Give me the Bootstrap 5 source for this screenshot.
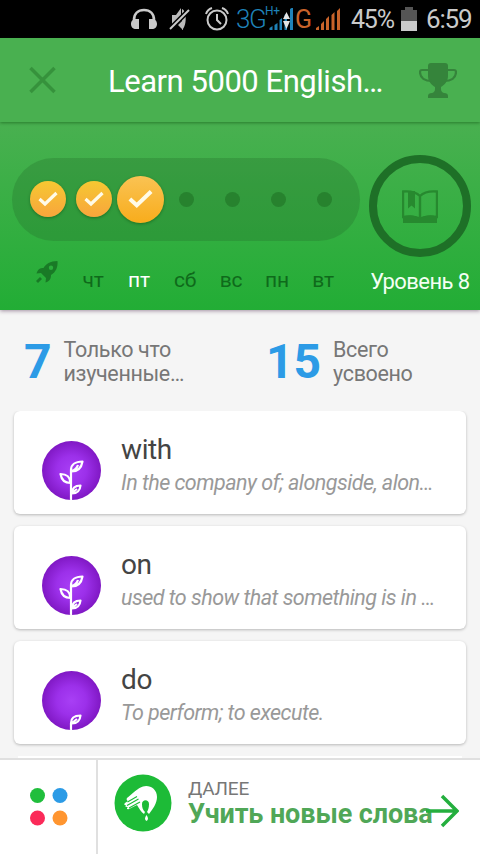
<!DOCTYPE html>
<html lang="ru">
<head>
<meta charset="utf-8">
<meta name="viewport" content="width=device-width, initial-scale=1">
<title>Learn 5000 English</title>
<link rel="stylesheet" href="https://cdn.jsdelivr.net/npm/bootstrap@5.3.0/dist/css/bootstrap.min.css">
<style>
body{font-family:Roboto,"Liberation Sans",sans-serif;background:#f5f5f5;width:480px;height:854px;line-height:1}
svg{display:block;flex:none}
.statusbar{height:38px;background:#000;color:#cacaca;padding-left:131px}
.alarm{margin-left:12px}
.net-a{font-size:26px;letter-spacing:-1.4px;color:#1f82b8;font-weight:300;width:29px;margin-left:7px}
.net-h{font-size:12px;letter-spacing:-.3px;color:#1f82b8;width:17px;height:28px}
.net-bars{margin-left:-13px}
.net-g{font-size:25px;letter-spacing:-1px;color:#c8632a;width:20px;margin-left:1px}
.net-orange{margin-left:1px}
.batt-pct{font-size:25px;letter-spacing:-1.2px;margin-left:10px;width:50px}
.clock{font-size:26px;letter-spacing:-1.2px;margin-left:9px}
.appbar{height:84px;background:#49b050;color:#fff;z-index:2;box-shadow:0 1px 3px rgba(0,60,0,.45);padding:0 23px 0 29px}
.app-title{font-size:31px;letter-spacing:-.47px;margin-left:52px;width:311px;padding-top:4px}
.hero{height:188px;background:linear-gradient(#49b050,#22ad35);padding:33px 9px 0 12px;box-shadow:0 1px 4px rgba(60,20,60,.45);z-index:1}
.streak{width:348px;padding-top:3px}
.pill{height:83px;border-radius:42px;background:rgba(38,110,42,.3);padding:0 13px 1px}
.day{width:46px;flex:none;display:flex;justify-content:center;align-items:center}
.coin{width:36px;height:36px;border-radius:50%;background:linear-gradient(#f6c832,#f8a53c);box-shadow:0 1px 3px rgba(0,50,0,.4);display:flex;align-items:center;justify-content:center;flex:none}
.coin-lg{width:47px;height:47px;background:linear-gradient(#fac353,#f8ac1c)}
.dot{width:15px;height:15px;border-radius:50%;background:#27822e}
.names{padding:0 14px 0 12px;margin-top:21px;font-size:21px;letter-spacing:-.2px;color:#0f6a1b;height:36px}
.level{width:102px}
.ring{width:102px;height:102px;border:8px solid #1e7027}
.level-name{font-size:22px;letter-spacing:-.55px;margin-top:14px;color:#f4fff4}
.stats{height:101px;padding:30px 0 0 24px}
.stat-new{width:242px}
.num{font-size:48px;color:#2c9be6;font-weight:700;line-height:44px}
.stat-label{font-size:21.5px;letter-spacing:-.35px;line-height:24px;color:#777;margin:-2px 0 0 12px}
.word{height:103px;margin:0 14px 12px;background:#fff;border-radius:6px;box-shadow:0 1px 3px rgba(0,0,0,.25);padding:0 28px}
.orb{margin-top:15px}
.term{font-size:28px;letter-spacing:-.4px;color:#444;margin-top:4px}
.def{font-size:21.5px;letter-spacing:-.52px;font-style:italic;color:#999;margin-top:8px}
.word-next{height:4px;margin:0 18px;background:#fff}
.word-list{height:347px}
.bottombar{height:96px;background:#fff;border-top:2px solid #e0e0e0}
.menu{width:98px;border-right:2px solid #e0e0e0;padding-left:2px}
.next-icon{margin-top:-2px}
.next-over{font-size:19px;letter-spacing:-.2px;color:#777;margin-top:-1px}
.next-main{font-size:27px;letter-spacing:-.1px;font-weight:700;color:#50a757;width:244px;margin-top:-1px}
.next-arrow{margin-left:-6px;margin-top:18px}
</style>
<script src="https://cdn.jsdelivr.net/npm/bootstrap@5.3.0/dist/js/bootstrap.bundle.min.js"></script>
</head>
<body class="d-flex flex-column overflow-hidden text-nowrap">
<svg width="0" height="0" class="position-absolute">
<defs>
<radialGradient id="violet"><stop offset="0" stop-color="#a83ff5"/><stop offset=".5" stop-color="#9c30ea"/><stop offset="1" stop-color="#8018c4"/></radialGradient>
<clipPath id="orbclip"><circle cx="29.5" cy="29.5" r="29.5"/></clipPath>
<symbol id="tick" viewBox="0 0 20 16"><path d="M1.500 8 7 13 18.500 2" fill="none" stroke="#fffbe8" stroke-width="3.200"/></symbol>
<symbol id="plant" viewBox="0 0 59 59"><circle cx="29.5" cy="29.5" r="29.5" fill="url(#violet)"/><g clip-path="url(#orbclip)" fill="none" stroke="#fff" stroke-width="2.2" stroke-linejoin="round"><path d="M29 60V29c0-5 4-8.500 11.500-8.500-1 6-4 10-11 10M29.500 30C33 29 35 27 36 24M28.500 42c-6 0-9-3-10-9 6 0 9.500 2 10 9ZM30 52.500c0-5 3-8 8.500-8-.5 5-3.500 8-8.500 8ZM30 52 35 48"/></g></symbol>
<symbol id="sprout" viewBox="0 0 59 59"><circle cx="29.500" cy="29.500" r="29.500" fill="url(#violet)"/><g clip-path="url(#orbclip)" fill="none" stroke="#fff" stroke-width="2.200" stroke-linejoin="round"><path d="M29 60V52c0-5 3-7.500 9.500-7.500-.5 5-3.500 8-8.500 8M30 52 35 48"/></g></symbol>
</defs></svg>

<div class="statusbar d-flex align-items-center">
<svg width="26" height="22" viewBox="0 0 26 22"><path d="M3 15V12C3 5.500 7 2 13 2s10 3.500 10 10v3" fill="none" stroke="#cacaca" stroke-width="2.600"/><path d="M8 11v10H5c-3 0-5-2-5-5s2-5 5-5ZM18 11v10h3c3 0 5-2 5-5s-2-5-5-5Z" fill="#cacaca"/></svg>
<svg class="ms-2 ps-1" width="28" height="24" viewBox="0 0 24 24"><path d="M3 8h4L12 1v13l-6 5H3Z" fill="#bbb"/><path d="M9 18 14 13v10ZM13 2c5 2 5 17 0 21" fill="#bbb"/><path d="M1 22 20 3" stroke="#000" stroke-width="5"/><path d="M1 22 20 3" stroke="#cacaca" stroke-width="2"/></svg>
<svg class="alarm" width="24" height="24" viewBox="0 0 24 24" fill="none" stroke="#cacaca" stroke-width="2"><circle cx="12" cy="13" r="9.500"/><path d="M12 7v6l4 4M1 7C2 4 4 2 7 1M17 1c3 1 5 3 6 6"/></svg>
<span class="net-a">3G</span><span class="net-h">H+</span>
<svg class="net-bars" width="25" height="23" viewBox="0 0 24 23"><path d="M0 22v-2l3-2v4ZM5 22v-5l3-2v7ZM10 22V12l2.500-2v12ZM15 22V7l2.500-2v17ZM20.500 22V1l3-2v23Z" fill="#1f82b8"/><path d="M17 4 20.500 11h-7ZM13.500 13h7L17 21Z" fill="#e4e4e4"/></svg>
<span class="net-g">G</span>
<svg class="net-orange" width="25" height="23" viewBox="0 0 25 23"><path d="M0 22v-2l3-2v4ZM5 22v-6l3-3v9ZM10 22V11l3-3v14ZM15.500 22V7l3-3v18ZM21 22V3l3-3v22Z" fill="#c8632a"/></svg>
<span class="batt-pct">45%</span>
<svg width="16" height="24" viewBox="0 0 16 24"><path d="M0 3h4V0h8v3h4v11H0Z" fill="#555"/><path d="M0 14h16v10H0Z" fill="#cacaca"/></svg>
<span class="clock">6:59</span>
</div>

<header class="appbar d-flex align-items-center position-relative">
<svg width="27" height="28" viewBox="0 0 27 28"><path d="M1.500 2 25.500 26M25.500 2 1.500 26" stroke="#36923c" stroke-width="3.500"/></svg>
<h1 class="app-title mb-0 fw-normal">Learn 5000 English…</h1>
<svg width="38" height="35" viewBox="0 0 38 35"><path d="M9 3q0-3 3-3h14q3 0 3 3v10c0 6-4 9-7 11v2q0 3 3 4 4 0 4 3v2H9v-2q0-3 4-3 3-1 3-4v-2c-3-2-7-5-7-11Z" fill="#35843b"/><path d="M10 7H3q-2 0-2 2c0 6 5 9 12 9M28 7h7q2 0 2 2c0 6-5 9-12 9" fill="none" stroke="#35843b" stroke-width="2.200"/></svg>
</header>

<section class="hero d-flex justify-content-between position-relative">
<div class="streak">
<div class="pill d-flex align-items-center">
<div class="day"><div class="coin"><svg width="20" height="16"><use href="#tick"/></svg></div></div>
<div class="day"><div class="coin"><svg width="20" height="16"><use href="#tick"/></svg></div></div>
<div class="day"><div class="coin coin-lg"><svg width="25" height="20"><use href="#tick"/></svg></div></div>
<div class="day"><i class="dot"></i></div><div class="day"><i class="dot"></i></div><div class="day"><i class="dot"></i></div><div class="day"><i class="dot"></i></div>
</div>
<div class="names d-flex align-items-center">
<div class="day pb-3"><svg width="22" height="22" viewBox="0 0 22 22"><path fill-rule="evenodd" d="M21.500 0C14 0 10 3 7.500 7 4 7 2 8 .5 12.500L5 12l5 5-.5 4.500c4.500-1.500 5.500-4 5.500-7.500 5-3 7-8 6.500-14ZM15 4.500a2.200 2.200 0 1 1 0 4.400 2.200 2.200 0 0 1 0-4.400Z" fill="#197a26"/><path d="m1 21 4-4" stroke="#197a26" stroke-width="2.800"/></svg></div>
<div class="day">чт</div><div class="day text-white">пт</div><div class="day">сб</div><div class="day">вс</div><div class="day">пн</div><div class="day">вт</div>
</div>
</div>
<div class="level d-flex flex-column align-items-center">
<div class="ring rounded-circle d-flex align-items-center justify-content-center"><svg width="36" height="33" viewBox="0 0 36 33"><path d="M18 6C13 1 7 1 1 1.500V27c7-1 12-1 17 2 5-3 10-3 17-2V1.500C29 1 23 1 18 6ZV29" fill="none" stroke="#27892f" stroke-width="2.400"/><path d="M6 1h7v17.500l-3.500-3L6 18.500ZM0 26.500h1c7-2 13-1 17 2 4-3 10-4 17-2h1V28h-1v5H1v-5H0Z" fill="#27892f"/></svg></div>
<div class="level-name">Уровень 8</div>
</div>
</section>

<section class="stats d-flex">
<div class="stat-new d-flex"><div class="num">7</div><div class="stat-label">Только что<br>изученные…</div></div>
<div class="d-flex"><div class="num">15</div><div class="stat-label">Всего<br>усвоено</div></div>
</section>

<main class="word-list overflow-hidden">
<article class="word d-flex align-items-center"><svg class="orb" width="59" height="59"><use href="#plant"/></svg><div class="ms-3 ps-1"><div class="term">with</div><div class="def">In the company of; alongside, alon…</div></div></article>
<article class="word d-flex align-items-center"><svg class="orb" width="59" height="59"><use href="#plant"/></svg><div class="ms-3 ps-1"><div class="term">on</div><div class="def">used to show that something is in …</div></div></article>
<article class="word d-flex align-items-center"><svg class="orb" width="59" height="59"><use href="#sprout"/></svg><div class="ms-3 ps-1"><div class="term">do</div><div class="def">To perform; to execute.</div></div></article>
<div class="word-next"></div>
</main>

<footer class="bottombar d-flex">
<div class="menu d-flex align-items-center justify-content-center"><svg width="38" height="38" viewBox="0 0 38 38"><circle cx="7.500" cy="7.500" r="7.500" fill="#20be3c"/><circle cx="30" cy="7.500" r="7.500" fill="#2c9be6"/><circle cx="7.500" cy="30" r="7.500" fill="#fb2a59"/><circle cx="30" cy="30" r="7.500" fill="#ff9530"/></svg></div>
<div class="d-flex ps-3 pt-3">
<svg class="next-icon" width="58" height="58" viewBox="0 0 58 58"><circle cx="29" cy="29" r="28.500" fill="#1dbb37"/><path d="M13 24C18 20 24 14 29 12.500c6-2 14 2 14 10.500 0 6-4 12-8 17l-2-2c1-2 2-4 2-8 0-5-7-5-7 0 0 4 1 6 3 8l-1 2c-3-2-5-6-7-9l-8 4c-2 1-3-1-1-2l-1 0c-2 0-2-1-1-2h-1c-1 0-1-1 0-2l3-2c-1 0-2-2-1-3Z" fill="#fff"/><path d="M13.500 28 23 22.500M13 31.500l11.500-6.500M15 34l11-6" stroke="#1dbb37" stroke-width="1.100"/><path d="M32.500 41q3 4 0 6-3-2 0-6" fill="#fff"/></svg>
<div class="ms-3 pt-1"><div class="next-over">ДАЛЕЕ</div><div class="next-main pt-1">Учить новые слова</div></div>
<svg class="next-arrow" width="33" height="34" viewBox="0 0 33 34"><path d="M0 17h30M16 2l15 15-15 15" fill="none" stroke="#24af3e" stroke-width="3.500"/></svg>
</div>
</footer>
</body>
</html>
